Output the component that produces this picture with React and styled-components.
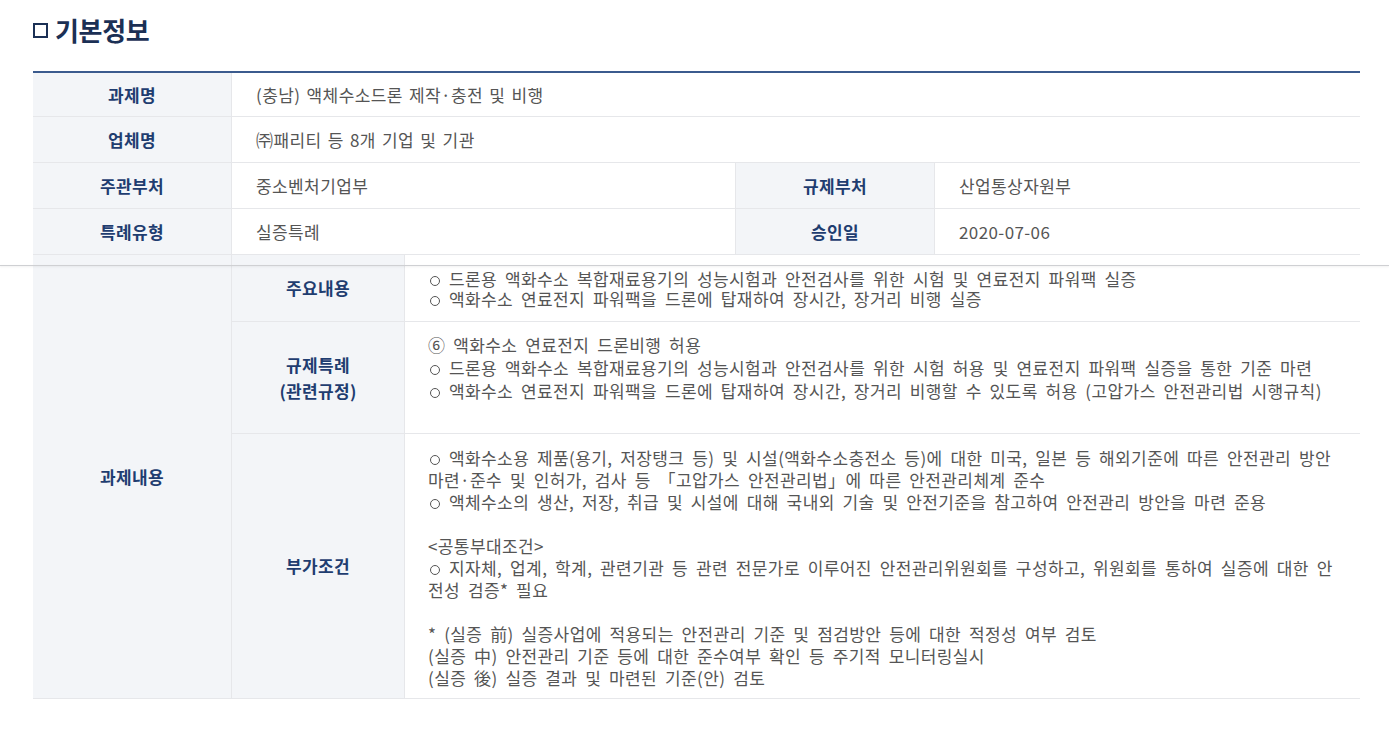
import React from "react";
import styled, { createGlobalStyle } from "styled-components";

const Global = createGlobalStyle`
  html, body { margin: 0; padding: 0; background: #fff; }
  body { font-family: "Noto Sans CJK KR", "Noto Sans", sans-serif; }
  * { box-sizing: border-box; }
`;

const Page = styled.div`
  position: relative;
  width: 1389px;
  height: 754px;
  padding: 16px 29px 0 33px;
  overflow: hidden;
`;

const Title = styled.h2`
  margin: 0 0 28px;
  font-size: 26px;
  line-height: 27px;
  font-weight: 700;
  color: #1b3055;
  letter-spacing: -0.3px;
  display: flex;
  align-items: center;
  gap: 7px;
`;

const Box = styled.span`
  display: inline-block;
  width: 15px;
  height: 15px;
  border: 2px solid #1b3055;
  margin-top: 2px;
`;

const InfoGrid = styled.div`
  display: grid;
  grid-template-columns: 199px 504px 199px 1fr;
  border-top: 2px solid #3b5b8e;
`;

const Label = styled.div`
  background: #f3f5f8;
  color: #1f3d70;
  font-weight: 700;
  font-size: 17px;
  display: flex;
  align-items: center;
  justify-content: center;
  text-align: center;
  border-bottom: 1px solid #e6e7ea;
  border-right: 1px solid #e6e7ea;
  height: ${(p) => p.$h || 46}px;
  line-height: 26px;
  letter-spacing: 0.3px;
  grid-row: ${(p) => p.$row || "auto"};
`;

const Value = styled.div`
  color: #555;
  font-size: 17px;
  display: flex;
  align-items: center;
  padding-left: 24px;
  border-bottom: 1px solid #e6e7ea;
  height: ${(p) => p.$h || 46}px;
  letter-spacing: 0.4px;
  word-spacing: 2px;
  grid-column: ${(p) => (p.$span ? "2 / 5" : "auto")};
  ${(p) => p.$divider && "border-right: 1px solid #e6e7ea;"}
`;

const DetailGrid = styled.div`
  display: grid;
  grid-template-columns: 199px 173px 1fr;
  grid-template-rows: 67px 112px 265px;
`;

const Content = styled.div`
  color: #555;
  font-size: 17px;
  line-height: ${(p) => p.$lh}px;
  padding: ${(p) => p.$pt}px 0 0 23px;
  border-bottom: 1px solid #e6e7ea;
  white-space: nowrap;
  letter-spacing: 0.4px;
  word-spacing: 3.6px;
`;

const Line = styled.div`
  height: ${(p) => p.$lh || 22}px;
`;

const Bullet = styled.span`
  display: inline-block;
  width: 10px;
  height: 10px;
  border: 1.3px solid #555;
  border-radius: 50%;
  margin: 0 9px 1px 2px;
  vertical-align: middle;
`;

const CutLine = styled.div`
  position: absolute;
  left: 0;
  right: 0;
  top: 265px;
  height: 1px;
  background: #cfd0d3;
  box-shadow: 0 1px 2px rgba(0, 0, 0, 0.08);
`;

const main = [
  [true, "드론용 액화수소 복합재료용기의 성능시험과 안전검사를 위한 시험 및 연료전지 파워팩 실증"],
  [true, "액화수소 연료전지 파워팩을 드론에 탑재하여 장시간, 장거리 비행 실증"],
];

const special = [
  [false, "⑥ 액화수소 연료전지 드론비행 허용"],
  [true, "드론용 액화수소 복합재료용기의 성능시험과 안전검사를 위한 시험 허용 및 연료전지 파워팩 실증을 통한 기준 마련"],
  [true, "액화수소 연료전지 파워팩을 드론에 탑재하여 장시간, 장거리 비행할 수 있도록 허용 (고압가스 안전관리법 시행규칙)"],
];

const conditions = [
  [true, "액화수소용 제품(용기, 저장탱크 등) 및 시설(액화수소충전소 등)에 대한 미국, 일본 등 해외기준에 따른 안전관리 방안"],
  [false, "마련·준수 및 인허가, 검사 등 「고압가스 안전관리법」에 따른 안전관리체계 준수"],
  [true, "액체수소의 생산, 저장, 취급 및 시설에 대해 국내외 기술 및 안전기준을 참고하여 안전관리 방안을 마련 준용"],
  [false, ""],
  [false, "<공통부대조건>"],
  [true, "지자체, 업계, 학계, 관련기관 등 관련 전문가로 이루어진 안전관리위원회를 구성하고, 위원회를 통하여 실증에 대한 안"],
  [false, "전성 검증* 필요"],
  [false, ""],
  [false, "* (실증 前) 실증사업에 적용되는 안전관리 기준 및 점검방안 등에 대한 적정성 여부 검토"],
  [false, "(실증 中) 안전관리 기준 등에 대한 준수여부 확인 등 주기적 모니터링실시"],
  [false, "(실증 後) 실증 결과 및 마련된 기준(안) 검토"],
];

function Lines({ items, lh }) {
  return items.map(([b, t], i) => (
    <Line key={i} $lh={lh}>
      {b && <Bullet />}
      {t}
    </Line>
  ));
}

export default function App() {
  return (
    <Page>
      <Global />
      <Title>
        <Box />
        기본정보
      </Title>
      <InfoGrid>
        <Label $h={44}>과제명</Label>
        <Value $h={44} $span>(충남) 액체수소드론 제작·충전 및 비행</Value>
        <Label>업체명</Label>
        <Value $span>㈜패리티 등 8개 기업 및 기관</Value>
        <Label>주관부처</Label>
        <Value $divider>중소벤처기업부</Value>
        <Label>규제부처</Label>
        <Value>산업통상자원부</Value>
        <Label>특례유형</Label>
        <Value $divider>실증특례</Value>
        <Label>승인일</Label>
        <Value>2020-07-06</Value>
      </InfoGrid>
      <DetailGrid>
        <Label $row="1 / 4" $h={444}>과제내용</Label>
        <Label $h={67}>주요내용</Label>
        <Content $lh={20} $pt={14}>
          <Lines items={main} lh={20} />
        </Content>
        <Label $h={112}>
          규제특례
          <br />
          (관련규정)
        </Label>
        <Content $lh={23} $pt={11}>
          <Lines items={special} lh={23} />
        </Content>
        <Label $h={265}>부가조건</Label>
        <Content $lh={22} $pt={13}>
          <Lines items={conditions} lh={22} />
        </Content>
      </DetailGrid>
      <CutLine />
    </Page>
  );
}
